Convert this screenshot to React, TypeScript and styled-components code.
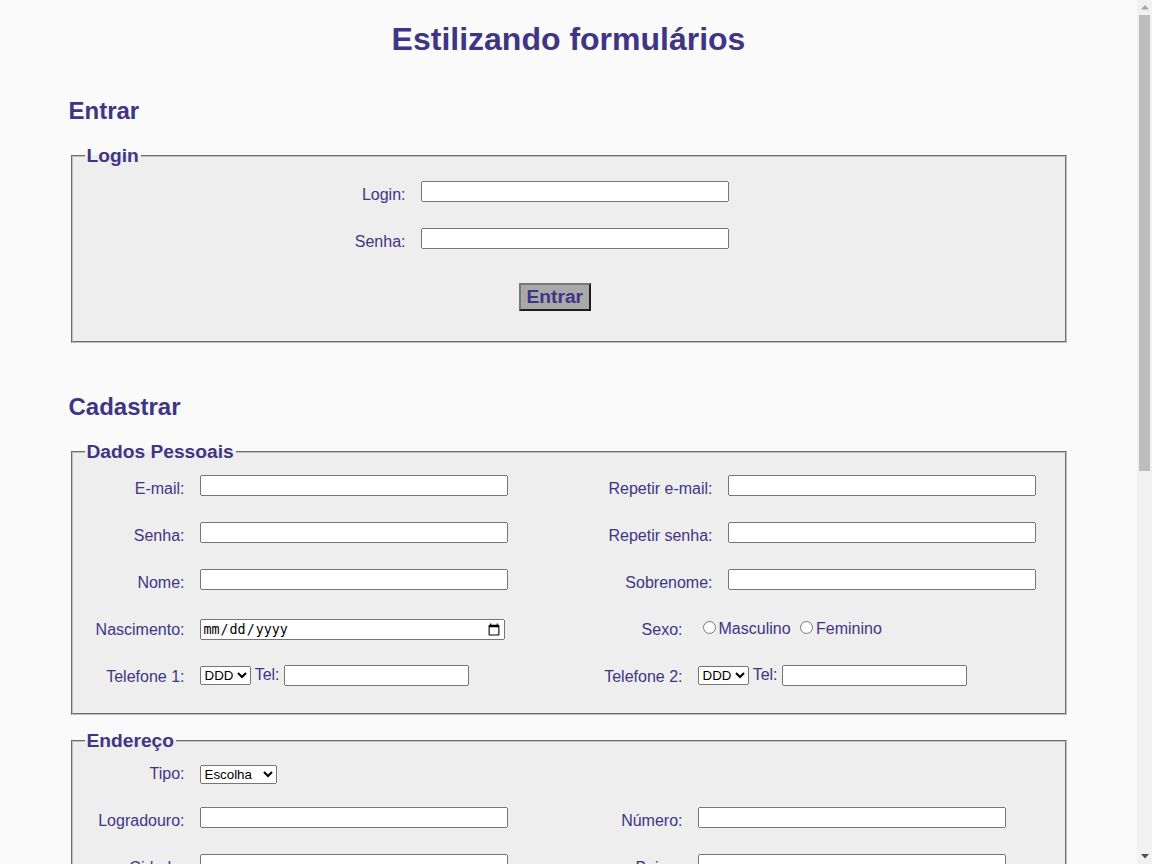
import React from 'react';
import styled, { createGlobalStyle } from 'styled-components';

const PURPLE = '#403585';

const GlobalStyle = createGlobalStyle`
  html, body { background: #fafafa; }
  body {
    margin: 0;
    padding-right: 15px;
    font-family: "Liberation Sans", Arial, Helvetica, sans-serif;
    color: ${PURPLE};
  }
`;

const Page = styled.main`
  width: 1000px;
  margin: 0 auto;
  padding-bottom: 60px;
  display: flex;
  flex-direction: column;
`;

const Title = styled.h1`
  margin: 21px 0 39px;
  font-size: 32px;
  font-weight: bold;
  text-align: center;
`;

const Section = styled.section<{ $mb?: number }>`
  display: flex;
  flex-direction: column;
  margin-bottom: ${(p) => p.$mb ?? 0}px;
`;

const SectionTitle = styled.h2`
  margin: 0 0 20px;
  font-size: 24px;
  font-weight: bold;
`;

const Fieldset = styled.fieldset`
  margin: 0 2px 15px;
  padding: 5.6px 12px 10px;
  border: 2px groove #c0c0c0;
  background: #eeeeee;
  min-width: 0;
`;

const Legend = styled.legend`
  padding: 0 2px;
  font-size: 19.2px;
  font-weight: bold;
`;

const Rows = styled.div<{ $pb: number }>`
  display: flex;
  flex-direction: column;
  padding-bottom: ${(p) => p.$pb}px;
`;

const Row = styled.div<{ $cols: string; $mt: number; $baseline?: boolean }>`
  display: grid;
  grid-template-columns: ${(p) => p.$cols};
  column-gap: 15px;
  align-items: ${(p) => (p.$baseline ? 'baseline' : 'start')};
  margin-top: ${(p) => p.$mt}px;
`;

/* $top: label pinned to the row top with that offset; otherwise it sits on the row baseline */
const Label = styled.label<{ $top?: number }>`
  font-size: 16px;
  line-height: ${(p) => (p.$top === 5 ? '18px' : 'normal')};
  align-self: ${(p) => (p.$top === undefined ? 'baseline' : 'start')};
  margin-top: ${(p) => p.$top ?? 0}px;
  text-align: right;
  white-space: nowrap;
`;

const Cell = styled.div`
  font-size: 16px;
  white-space: nowrap;
`;

const TextInput = styled.input<{ $w?: number }>`
  width: ${(p) => p.$w ?? 300}px;
  justify-self: start;
`;

const DateInput = styled.input`
  box-sizing: border-box;
  width: 305px;
  justify-self: start;
`;

const TextArea = styled.textarea`
  width: 600px;
  justify-self: start;
`;

const OptionLabel = styled.label`
  font-size: 16px;
`;

const ButtonRow = styled.div<{ $offset: number; $mt: number }>`
  display: flex;
  gap: 12px;
  padding-left: ${(p) => p.$offset}px;
  margin-top: ${(p) => p.$mt}px;
`;

const Button = styled.button`
  font-family: inherit;
  font-size: 19.2px;
  font-weight: bold;
  color: ${PURPLE};
  background: #a9a9a9;
  border: 2px solid;
  border-color: #787878 #1f1f1f #1f1f1f #787878;
  padding: 1px 6px;
  cursor: pointer;
`;

/* Window scrollbar as it appears in the reference capture */
const ScrollTrack = styled.div`
  position: fixed;
  top: 0;
  right: 0;
  width: 15px;
  height: 100vh;
  background: #f1f1f1;
  display: flex;
  flex-direction: column;
  align-items: center;
`;

const ScrollArrow = styled.div<{ $down?: boolean }>`
  height: 15px;
  display: flex;
  align-items: center;
  justify-content: center;
  margin-top: ${(p) => (p.$down ? 'auto' : '0')};
  color: ${(p) => (p.$down ? '#505050' : '#a3a3a3')};
`;

const ScrollThumb = styled.div`
  width: 11px;
  height: 456px;
  background: #bdbdbd;
`;

const LOGIN = '321px 308px';
const WIDE = '100px 308px 190px 308px';
const NARROW = '100px 308px 160px 308px';

const DDD = ['DDD', '11', '21', '31', '41', '51', '61', '71', '81', '91'];

const Phone: React.FC<{ id: string }> = ({ id }) => (
  <Cell>
    <select aria-label={`DDD ${id}`} defaultValue="DDD">
      {DDD.map((d) => (
        <option key={d} value={d}>
          {d}
        </option>
      ))}
    </select>{' '}
    <OptionLabel htmlFor={id}>Tel:</OptionLabel> <TextInput id={id} type="tel" $w={177} />
  </Cell>
);

const Arrow: React.FC<{ down?: boolean }> = ({ down }) => (
  <ScrollArrow $down={down}>
    <svg width="8" height="5" viewBox="0 0 8 5">
      <path d={down ? 'M0 0 H8 L4 4.5 Z' : 'M0 4.5 H8 L4 0 Z'} fill="currentColor" />
    </svg>
  </ScrollArrow>
);

export default function App() {
  return (
    <>
      <GlobalStyle />
      <Page>
        <Title>Estilizando formulários</Title>

        <Section $mb={35}>
          <SectionTitle>Entrar</SectionTitle>
          <Fieldset>
            <Legend>Login</Legend>
            <Rows $pb={19.5}>
              <Row $cols={LOGIN} $mt={8}>
                <Label $top={5} htmlFor="login">Login:</Label>
                <TextInput id="login" type="text" />
              </Row>
              <Row $cols={LOGIN} $mt={24}>
                <Label $top={5} htmlFor="senha">Senha:</Label>
                <TextInput id="senha" type="password" />
              </Row>
              <ButtonRow $offset={434} $mt={32.5}>
                <Button type="button">Entrar</Button>
              </ButtonRow>
            </Rows>
          </Fieldset>
        </Section>

        <Section>
          <SectionTitle>Cadastrar</SectionTitle>
          <Fieldset>
            <Legend>Dados Pessoais</Legend>
            <Rows $pb={17}>
              <Row $cols={WIDE} $mt={7}>
                <Label $top={5} htmlFor="email">E-mail:</Label>
                <TextInput id="email" type="email" />
                <Label $top={5} htmlFor="email2">Repetir e-mail:</Label>
                <TextInput id="email2" type="email" />
              </Row>
              <Row $cols={WIDE} $mt={24}>
                <Label $top={5} htmlFor="cad-senha">Senha:</Label>
                <TextInput id="cad-senha" type="password" />
                <Label $top={5} htmlFor="cad-senha2">Repetir senha:</Label>
                <TextInput id="cad-senha2" type="password" />
              </Row>
              <Row $cols={WIDE} $mt={24}>
                <Label $top={5} htmlFor="nome">Nome:</Label>
                <TextInput id="nome" type="text" />
                <Label $top={5} htmlFor="sobrenome">Sobrenome:</Label>
                <TextInput id="sobrenome" type="text" />
              </Row>
              <Row $cols={NARROW} $mt={25.7} $baseline>
                <Label $top={3} htmlFor="nasc">Nascimento:</Label>
                <DateInput id="nasc" type="date" />
                <Label $top={3}>Sexo:</Label>
                <Cell>
                  <input type="radio" name="sexo" id="masc" />
                  <OptionLabel htmlFor="masc">Masculino</OptionLabel>{' '}
                  <input type="radio" name="sexo" id="fem" />
                  <OptionLabel htmlFor="fem">Feminino</OptionLabel>
                </Cell>
              </Row>
              <Row $cols={NARROW} $mt={25} $baseline>
                <Label $top={2.5} htmlFor="tel1">Telefone 1:</Label>
                <Phone id="tel1" />
                <Label $top={2.5} htmlFor="tel2">Telefone 2:</Label>
                <Phone id="tel2" />
              </Row>
            </Rows>
          </Fieldset>

          <Fieldset>
            <Legend>Endereço</Legend>
            <Rows $pb={16}>
              <Row $cols={NARROW} $mt={7} $baseline>
                <Label htmlFor="tipo">Tipo:</Label>
                <Cell>
                  <select id="tipo" defaultValue="Escolha">
                    <option>Escolha</option>
                    <option>Rua</option>
                    <option>Avenida</option>
                    <option>Travessa</option>
                  </select>
                </Cell>
              </Row>
              <Row $cols={NARROW} $mt={23.5}>
                <Label $top={5} htmlFor="logradouro">Logradouro:</Label>
                <TextInput id="logradouro" type="text" />
                <Label $top={5} htmlFor="numero">Número:</Label>
                <TextInput id="numero" type="text" />
              </Row>
              <Row $cols={NARROW} $mt={24}>
                <Label $top={5} htmlFor="cidade">Cidade:</Label>
                <TextInput id="cidade" type="text" />
                <Label $top={5} htmlFor="bairro">Bairro:</Label>
                <TextInput id="bairro" type="text" />
              </Row>
              <Row $cols={NARROW} $mt={24}>
                <Label $top={5} htmlFor="complemento">Complemento:</Label>
                <TextInput id="complemento" type="text" />
                <Label $top={5} htmlFor="cep">CEP:</Label>
                <TextInput id="cep" type="text" />
              </Row>
              <Row $cols={NARROW} $mt={24} $baseline>
                <Label htmlFor="estado">Estado:</Label>
                <Cell>
                  <select id="estado" defaultValue="UF">
                    <option>UF</option>
                    <option>SP</option>
                    <option>RJ</option>
                    <option>MG</option>
                  </select>
                </Cell>
              </Row>
            </Rows>
          </Fieldset>

          <Fieldset>
            <Legend>Preferências</Legend>
            <Rows $pb={16}>
              <Row $cols={NARROW} $mt={8} $baseline>
                <Label>Interesses:</Label>
                <Cell>
                  <input type="checkbox" id="i1" />
                  <OptionLabel htmlFor="i1">Esportes</OptionLabel>{' '}
                  <input type="checkbox" id="i2" />
                  <OptionLabel htmlFor="i2">Música</OptionLabel>{' '}
                  <input type="checkbox" id="i3" />
                  <OptionLabel htmlFor="i3">Cinema</OptionLabel>
                </Cell>
                <Label>Novidades:</Label>
                <Cell>
                  <input type="radio" name="news" id="n1" />
                  <OptionLabel htmlFor="n1">Sim</OptionLabel>{' '}
                  <input type="radio" name="news" id="n2" />
                  <OptionLabel htmlFor="n2">Não</OptionLabel>
                </Cell>
              </Row>
              <Row $cols={NARROW} $mt={26}>
                <Label $top={5} htmlFor="obs">Observações:</Label>
                <TextArea id="obs" rows={10} />
              </Row>
            </Rows>
          </Fieldset>

          <ButtonRow $offset={400} $mt={8}>
            <Button type="submit">Cadastrar</Button>
            <Button type="reset">Limpar</Button>
          </ButtonRow>
        </Section>
      </Page>
      <ScrollTrack aria-hidden="true">
        <Arrow />
        <ScrollThumb />
        <Arrow down />
      </ScrollTrack>
    </>
  );
}
